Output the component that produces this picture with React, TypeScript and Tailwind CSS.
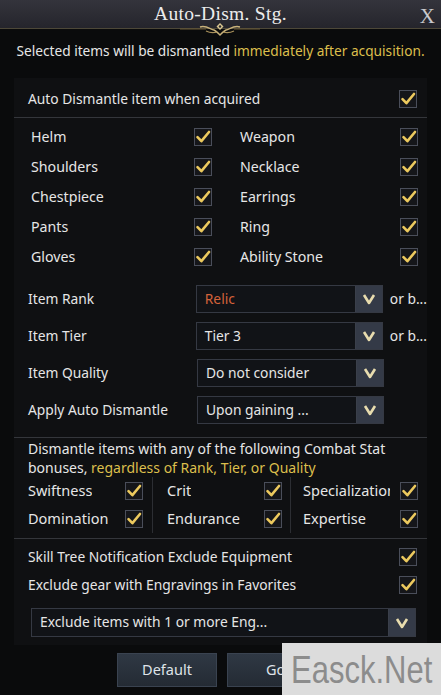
import type { ReactNode } from 'react';

const equipment: [string, string][] = [
  ['Helm', 'Weapon'],
  ['Shoulders', 'Necklace'],
  ['Chestpiece', 'Earrings'],
  ['Pants', 'Ring'],
  ['Gloves', 'Ability Stone'],
];

const stats: [string, string, string][] = [
  ['Swiftness', 'Crit', 'Specialization'],
  ['Domination', 'Endurance', 'Expertise'],
];

function Check() {
  return (
    <div className="w-[18px] h-[18px] shrink-0 border border-[#4a4e5a] bg-[#15161a] flex items-center justify-center">
      <svg width="16" height="16" viewBox="0 0 16 16">
        <path d="M2.5 8.2 L6.4 12.2 L14 3" fill="none" stroke="#ecc95e" strokeWidth="2.6" strokeLinecap="round" strokeLinejoin="round" />
      </svg>
    </div>
  );
}

function Arrow() {
  return (
    <svg width="14" height="12" viewBox="0 0 14 12">
      <path d="M2 2 L7 10 L12 2" fill="none" stroke="#e8dcae" strokeWidth="2.6" strokeLinejoin="round" />
    </svg>
  );
}

function Select({ children, className }: { children: ReactNode; className: string }) {
  return (
    <div className={`flex shrink-0 border border-[#353943] bg-[#111317] ${className}`}>
      <div className="flex-1 min-w-0 pl-[8px] flex items-center whitespace-nowrap overflow-hidden">{children}</div>
      <div className="w-[27px] bg-[#343a47] flex items-center justify-center border-l border-[#3a3f4a]">
        <Arrow />
      </div>
    </div>
  );
}

function Divider() {
  return <div className="h-px bg-[#34363b]" />;
}

export default function App() {
  return (
    <div
      className="relative w-[441px] h-[695px] overflow-hidden bg-[#0a0b0c] text-[#e6e6e6] text-[13.8px]"
      style={{ fontFamily: '"Noto Sans", sans-serif' }}
    >
      {/* Header */}
      <div className="relative h-[29px] bg-gradient-to-b from-[#34343c] to-[#25252c] border-b border-[#4d4838] flex items-center justify-center">
        <span
          className="text-[19.5px] text-[#ececec] tracking-[0.3px]"
          style={{ fontFamily: '"Liberation Serif", serif' }}
        >
          Auto-Dism. Stg.
        </span>
        <span
          className="absolute right-[6px] top-[1px] text-[21px] text-[#c8c8cc]"
          style={{ fontFamily: '"Liberation Serif", serif' }}
        >
          X
        </span>
        <svg className="absolute left-[180px] top-[21px]" width="80" height="16" viewBox="0 0 80 16">
          <path d="M0 8 H26 M54 8 H80" stroke="#6a5a36" strokeWidth="1" />
          <path d="M20 6 C26 4 30 8 34 9 C36 10 38 12 40 14 C42 12 44 10 46 9 C50 8 54 4 60 6" fill="none" stroke="#c9b27a" strokeWidth="1.4" />
          <path d="M26 10 C30 12 34 12 37 11 M54 10 C50 12 46 12 43 11" fill="none" stroke="#a8915c" strokeWidth="1.2" />
          <path d="M40 2 L43.5 5.5 L40 9 L36.5 5.5 Z" fill="#d9c690" />
          <circle cx="40" cy="5.5" r="1.2" fill="#2a2a30" />
        </svg>
      </div>

      {/* Subtitle */}
      <div className="mt-[11px] leading-[22px] text-center text-[13.7px] whitespace-nowrap">
        Selected items will be dismantled <span className="text-[#dcbf4c]">immediately after acquisition.</span>
      </div>

      {/* Panel */}
      <div className="mt-[16px] mx-[14px] bg-[#0f1012]">
        <div className="h-[39px] pt-[3px] pl-[14px] pr-[10px] flex items-center justify-between">
          <span>Auto Dismantle item when acquired</span>
          <Check />
        </div>
        <Divider />

        <div className="pt-[4px] pl-[17px] grid grid-cols-[181px_178px] gap-x-[28px] text-[14.2px]">
          {equipment.map(([a, b]) => (
            <div key={a} className="contents">
              <div className="h-[30px] flex items-center justify-between">
                <span>{a}</span>
                <Check />
              </div>
              <div className="h-[30px] flex items-center justify-between">
                <span>{b}</span>
                <Check />
              </div>
            </div>
          ))}
        </div>

        <div className="mt-[13px] pl-[14px] flex flex-col gap-[9px]">
          <div className="h-[28px] flex items-center whitespace-nowrap">
            <span className="w-[169px]">Item Rank</span>
            <Select className="w-[187px] h-[28px]"><span className="text-[#d4623a]">Relic</span></Select>
            <span className="ml-[7px]">or b...</span>
          </div>
          <div className="h-[28px] flex items-center whitespace-nowrap">
            <span className="w-[169px]">Item Tier</span>
            <Select className="w-[187px] h-[28px]">Tier 3</Select>
            <span className="ml-[7px]">or b...</span>
          </div>
          <div className="h-[28px] flex items-center whitespace-nowrap">
            <span className="w-[169px]">Item Quality</span>
            <Select className="w-[187px] h-[28px]">Do not consider</Select>
          </div>
          <div className="h-[28px] flex items-center whitespace-nowrap">
            <span className="w-[169px]">Apply Auto Dismantle</span>
            <Select className="w-[187px] h-[28px]">Upon gaining ...</Select>
          </div>
        </div>

        <div className="mt-[13px]">
          <Divider />
        </div>

        <div className="pl-[14px] pr-[8px] leading-[19px] pt-px text-[14px]">
          Dismantle items with any of the following Combat Stat bonuses,{' '}
          <span className="text-[#dcbf4c]">regardless of Rank, Tier, or Quality</span>
        </div>

        <div className="pl-[14px] flex text-[14.5px]">
          {[0, 1, 2].map((c) => (
            <div
              key={c}
              className={
                c === 0
                  ? 'w-[124px] pr-[9px]'
                  : c === 1
                  ? 'w-[138px] pl-[14px] pr-[8px] border-l border-[#2c2e33]'
                  : 'w-[128px] pl-[12px] border-l border-[#2c2e33]'
              }
            >
              {stats.map((r) => (
                <div key={r[c]} className="h-[28px] flex items-center justify-between gap-[4px]">
                  <span className="max-w-[87px] whitespace-nowrap overflow-hidden">{r[c]}</span>
                  <Check />
                </div>
              ))}
            </div>
          ))}
        </div>

        <div className="mt-[5px]">
          <Divider />
        </div>

        <div className="pt-[4px] pl-[14px] pr-[10px]">
          <div className="h-[28px] flex items-center justify-between">
            <span>Skill Tree Notification Exclude Equipment</span>
            <Check />
          </div>
          <div className="h-[28px] flex items-center justify-between">
            <span>Exclude gear with Engravings in Favorites</span>
            <Check />
          </div>
        </div>

        <div className="mt-[9px] pl-[17px] pb-[8px]">
          <Select className="w-[385px] h-[29px]">Exclude items with 1 or more Eng...</Select>
        </div>
      </div>

      {/* Buttons */}
      <div className="mt-[8px] pl-[117px] flex gap-[10px]">
        <button className="w-[100px] h-[34px] bg-gradient-to-b from-[#2f3844] to-[#242b34] border border-[#3a4350] text-[#dfe3e8] text-[14.5px]">
          Default
        </button>
        <button className="w-[100px] h-[34px] bg-gradient-to-b from-[#2f3844] to-[#242b34] border border-[#3a4350] text-[#dfe3e8] text-[14.5px] text-left pl-[38px]">
          Go
        </button>
      </div>

      {/* Watermark */}
      <div
        className="absolute left-[282px] top-[643px] w-[159px] h-[52px] bg-[#dcdcdc] flex items-center pl-[9px] text-[31px] text-[#8c8c8c] leading-none"
        style={{ fontFamily: '"Liberation Sans", sans-serif' }}
      >
        <span className="inline-block scale-y-[1.25] origin-center">Easck.Net</span>
      </div>
    </div>
  );
}
